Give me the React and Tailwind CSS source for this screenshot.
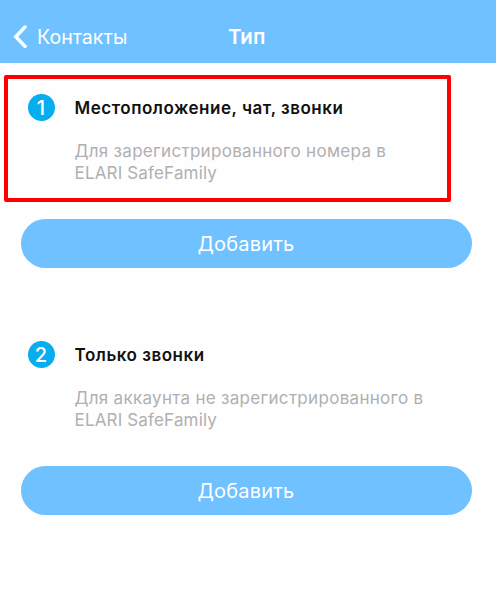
import React from 'react';

const options = [
    {
        id: 1,
        title: 'Местоположение, чат, звонки',
        text: 'Для зарегистрированного номера в',
        highlighted: true,
    },
    {
        id: 2,
        title: 'Только звонки',
        text: 'Для аккаунта не зарегистрированного в',
        highlighted: false,
    },
];

function Header() {
    return (
        <header className="relative h-[63px] bg-[#70c1ff] text-white">
            <button className="flex h-full items-start pl-[13px] pt-[25px]">
                <svg className="h-[24px] w-[14px]" viewBox="0 0 14 24" fill="none" stroke="currentColor" strokeWidth="3.5" strokeLinecap="round" strokeLinejoin="miter">
                    <path d="M12 2 L2.8 11.7 L12 21.2" />
                </svg>
                <span className="ml-[10px] text-[19.6px] leading-[24px]">Контакты</span>
            </button>
            <h1 className="absolute left-[228px] top-[25px] text-[20.5px] font-semibold leading-[24px]">Тип</h1>
        </header>
    );
}

function Option({ option }) {
    return (
        <section className="relative h-[247px] px-[21px] pt-[31px]">
            <div className="flex items-center pl-[7px]">
                <span className="flex h-[27px] w-[27px] shrink-0 items-center justify-center rounded-full bg-[#06adef] pr-px text-[20px] font-medium leading-none text-white">
                    {option.id}
                </span>
                <h2 className="ml-[19.5px] whitespace-nowrap pt-[2px] text-[17px] font-semibold leading-[25px] tracking-[0.52px] text-[#111]">
                    {option.title}
                </h2>
            </div>
            <p className="ml-[53.5px] mt-[20px] whitespace-nowrap text-[17px] leading-[21.5px] tracking-[0.3px] text-[#b0b0b0]">
                {option.text}
                <span className="block tracking-[0.16px]">ELARI SafeFamily</span>
            </p>
            <button className="mt-[35px] h-[48.5px] w-[451px] rounded-full bg-[#70c1ff] pr-px pt-[2px] text-[20px] leading-[24px] tracking-[0.2px] text-white">
                Добавить
            </button>
            {option.highlighted && (
                <div className="pointer-events-none absolute left-[4px] top-[12px] h-[127px] w-[447px] rounded-[2px] border-4 border-[#ff0000]" />
            )}
        </section>
    );
}

export default function App() {
    return (
        <div className="h-[610px] w-[496px] overflow-hidden bg-[#fefefe] font-['Inter',sans-serif]">
            <Header />
            <main>
                {options.map((option) => (
                    <Option key={option.id} option={option} />
                ))}
            </main>
        </div>
    );
}
